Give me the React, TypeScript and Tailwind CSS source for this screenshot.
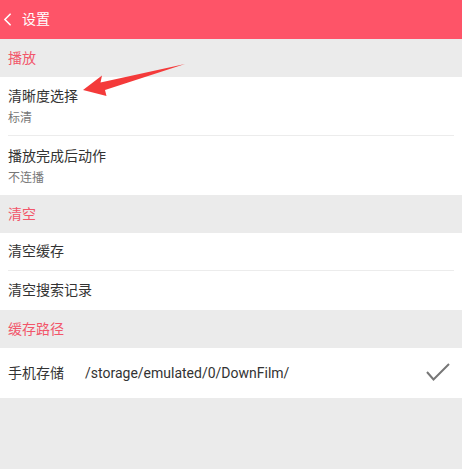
import { ChevronLeft } from 'lucide-react';

const font = "font-['Roboto','Noto_Sans_CJK_SC',sans-serif]";

function Section({ title }: { title: string }) {
  return (
    <div className="h-[38px] bg-[#ebebeb] flex items-center px-2">
      <span className="text-[14px] text-[#f2566a]">{title}</span>
    </div>
  );
}

function Divider() {
  return <div className="h-px bg-[#ececec] mx-2" />;
}

export default function App() {
  return (
    <div className={`${font} w-[462px] h-[469px] bg-[#ebebeb] overflow-hidden relative`}>
      {/* header */}
      <div className="h-[39px] bg-[#fe5468] flex items-center text-white">
        <ChevronLeft size={21} strokeWidth={1.9} className="ml-[-3px]" />
        <span className="ml-[4px] text-[14px]">设置</span>
      </div>

      <Section title="播放" />
      <div className="bg-white">
        <div className="h-[58px] flex flex-col justify-center px-2">
          <span className="text-[14px] text-[#333] leading-[18px]">清晰度选择</span>
          <span className="text-[12px] text-[#777] leading-[14px] mt-[6px]">标清</span>
        </div>
        <Divider />
        <div className="h-[59px] flex flex-col justify-center px-2">
          <span className="text-[14px] text-[#333] leading-[18px]">播放完成后动作</span>
          <span className="text-[12px] text-[#777] leading-[14px] mt-[6px]">不连播</span>
        </div>
      </div>

      <Section title="清空" />
      <div className="bg-white">
        <div className="h-[37px] flex items-center px-2">
          <span className="text-[14px] text-[#333]">清空缓存</span>
        </div>
        <Divider />
        <div className="h-[39px] flex items-center px-2">
          <span className="text-[14px] text-[#333]">清空搜索记录</span>
        </div>
      </div>

      <Section title="缓存路径" />
      <div className="bg-white h-[50px] flex items-center px-2">
        <span className="text-[14px] text-[#333] w-[77px]">手机存储</span>
        <span className="text-[14px] text-[#333] flex-1">/storage/emulated/0/DownFilm/</span>
        <svg width="26" height="20" viewBox="0 0 26 20" className="mr-[3px]">
          <path d="M2 9 L8.5 16.5 L24 1" fill="none" stroke="#777" strokeWidth="2" />
        </svg>
      </div>

      {/* annotation arrow */}
      <svg
        className="absolute left-0 top-0 pointer-events-none"
        width="462"
        height="469"
      >
        <polygon
          points="83,90 102,75.5 100.5,82.5 185,64 105,90 106.5,96"
          fill="#f43a3a"
        />
      </svg>
    </div>
  );
}
